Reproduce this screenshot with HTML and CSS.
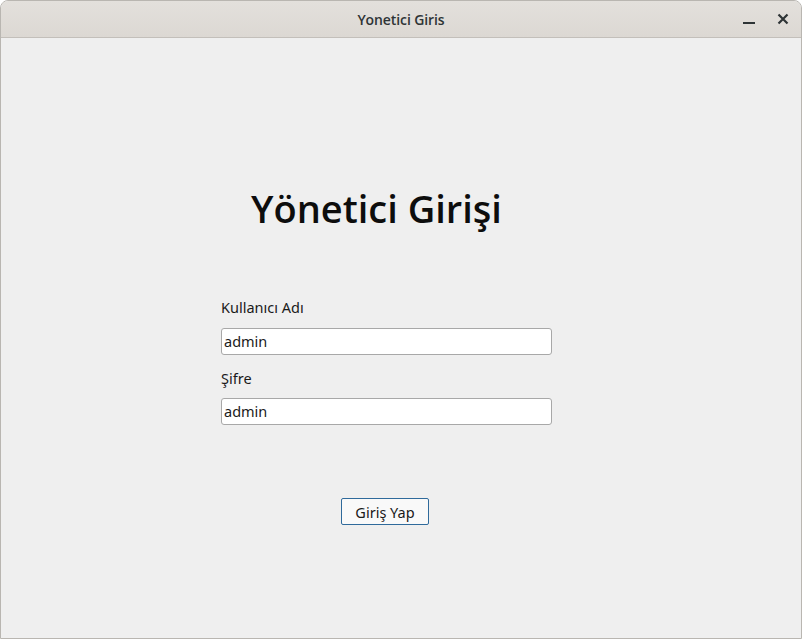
FILE: index.html
```html
<!DOCTYPE html>
<html lang="tr">
<head>
<meta charset="utf-8">
<title>Yonetici Giris</title>
<link rel="stylesheet" href="styles.css">
</head>
<body>
<div class="window">
  <header class="titlebar">
    <div class="title">Yonetici Giris</div>
    <div class="controls">
      <span class="ctl">
        <svg width="14" height="14" viewBox="0 0 14 14"><rect x="1" y="10" width="12" height="2" fill="#2e3436"/></svg>
      </span>
      <span class="ctl">
        <svg width="14" height="14" viewBox="0 0 14 14"><path d="M2.5 2.5 L11.5 11.5 M11.5 2.5 L2.5 11.5" stroke="#2e3436" stroke-width="2.2" fill="none"/></svg>
      </span>
    </div>
  </header>
  <main class="content">
    <h1 class="heading">Yönetici Girişi</h1>
    <form class="form">
      <label class="label">Kullanıcı Adı</label>
      <div class="input">admin</div>
      <label class="label second">Şifre</label>
      <div class="input">admin</div>
    </form>
    <div class="actions">
      <button class="btn" type="button">Giriş Yap</button>
    </div>
  </main>
</div>
</body>
</html>
```
FILE: styles.css
```css
* { box-sizing: border-box; }
html, body { margin: 0; padding: 0; }
body {
  width: 802px;
  height: 639px;
  background: #ffffff;
  font-family: "Noto Sans", "DejaVu Sans", sans-serif;
  color: #1a1a1a;
  overflow: hidden;
}
.window {
  width: 802px;
  height: 639px;
  border: 1px solid #b9b6b1;
  border-radius: 8px 8px 0 0;
  background: #efefef;
  display: flex;
  flex-direction: column;
  overflow: hidden;
}
.titlebar {
  height: 37px;
  flex: none;
  background: linear-gradient(#e3e0dc, #dcd8d3);
  border-bottom: 1px solid #c3bfba;
  display: flex;
  align-items: center;
  justify-content: center;
  position: relative;
}
.title {
  font-family: "Open Sans", "Noto Sans", sans-serif;
  font-weight: 600;
  font-size: 14px;
  color: #2e3436;
  letter-spacing: -0.1px;
}
.controls {
  position: absolute;
  right: 11px;
  top: 11px;
  display: flex;
  gap: 20px;
}
.ctl { display: block; width: 14px; height: 14px; }
.ctl svg { display: block; }
.content {
  flex: 1;
  display: flex;
  flex-direction: column;
  padding-top: 144px;
}
.heading {
  margin: 0 0 0 250px;
  font-family: "Open Sans", "Noto Sans", sans-serif;
  font-weight: 600;
  font-size: 38px;
  line-height: 52px;
  color: #0d0d0d;
  letter-spacing: 0;
}
.form {
  margin: 0 0 0 220px;
  padding-top: 63px;
  width: 331px;
  display: flex;
  flex-direction: column;
}
.label {
  font-size: 14.5px;
  line-height: 20px;
  height: 20px;
  color: #1a1a1a;
  margin-bottom: 11px;
}
.label.second { margin-top: 13px; margin-bottom: 10px; }
.input {
  height: 27px;
  background: #ffffff;
  border: 1px solid #a8a8a8;
  border-radius: 3px;
  padding: 0 2px;
  font-size: 14.5px;
  line-height: 24px;
  color: #1a1a1a;
}
.actions {
  margin-left: 340px;
  padding-top: 73px;
}
.btn {
  width: 88px;
  height: 27px;
  background: #f9f9f9;
  border: 1px solid #2f6a9b;
  border-radius: 2px;
  font-family: "Noto Sans", "DejaVu Sans", sans-serif;
  font-size: 14.5px;
  color: #1a1a1a;
  padding: 0;
  line-height: 24px;
}
```
